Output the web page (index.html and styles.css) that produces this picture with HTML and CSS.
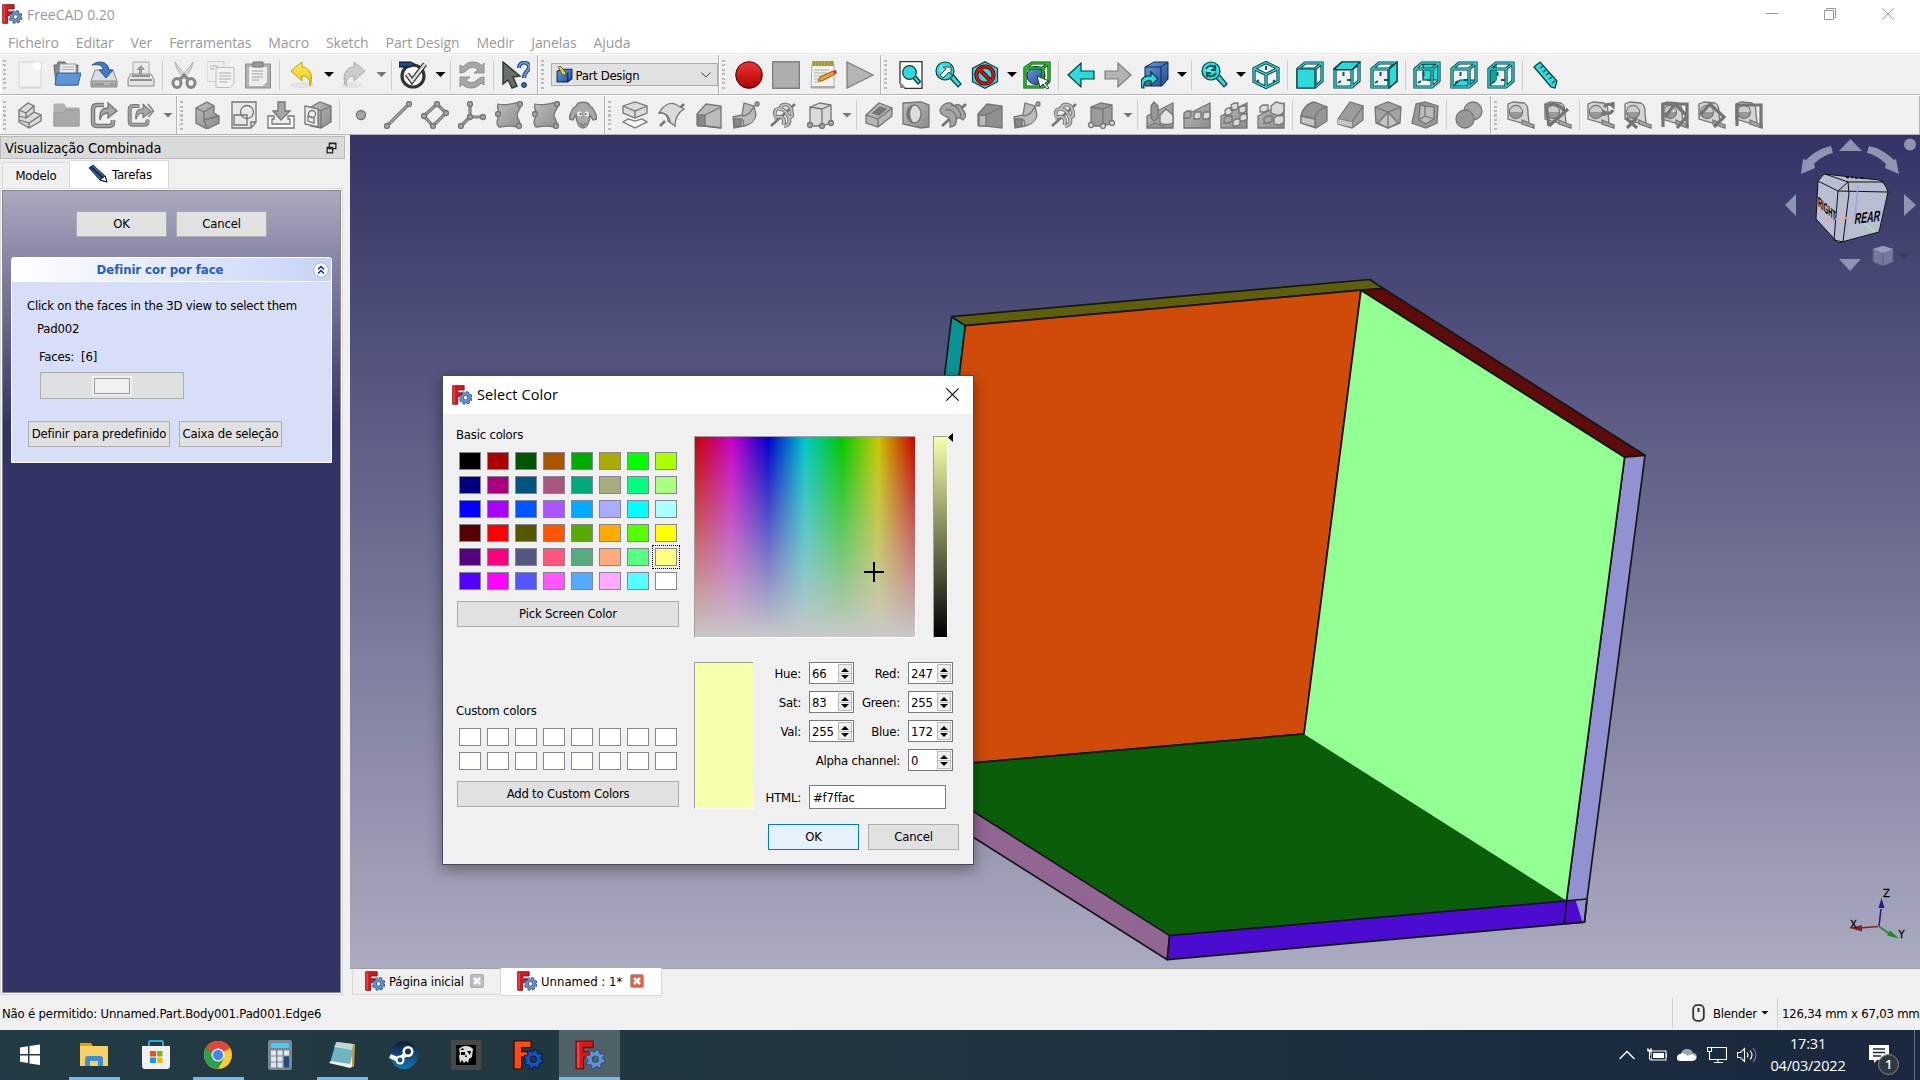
FILE: index.html
```
<!DOCTYPE html>
<html lang="pt">
<head>
<meta charset="utf-8">
<title>FreeCAD 0.20</title>
<link rel="stylesheet" href="styles.css">
</head>
<body>
<svg class="defs" width="0" height="0">
<defs>
<linearGradient id="gr" x1="0" y1="0" x2="0" y2="1"><stop offset="0" stop-color="#ee3434"/><stop offset="1" stop-color="#b00000"/></linearGradient>
<linearGradient id="gy" x1="0" y1="0" x2="0" y2="1"><stop offset="0" stop-color="#fbe96a"/><stop offset="1" stop-color="#ecc800"/></linearGradient>
<linearGradient id="gb" x1="0" y1="0" x2="1" y2="1"><stop offset="0" stop-color="#6b9bd8"/><stop offset="1" stop-color="#1c4a93"/></linearGradient>
<linearGradient id="gg" x1="0" y1="0" x2="1" y2="1"><stop offset="0" stop-color="#bdbdbd"/><stop offset="1" stop-color="#8c8c8c"/></linearGradient>
<linearGradient id="steam" x1="0" y1="0" x2="0" y2="1"><stop offset="0" stop-color="#14183c"/><stop offset="1" stop-color="#1477b0"/></linearGradient>
<symbol id="logo" viewBox="0 0 28 28"><path d="M1 1h16v6H8v4h6v5H8v11H1z" fill="#d8191c" stroke="#7a0c0e" stroke-width="1.200"/><path d="M2 2h2v24H2z" fill="#f04a4a"/><g fill="none"><circle cx="19" cy="18" r="7.600" stroke="#2c4a82" stroke-width="3.800" stroke-dasharray="3.600 2.370"/><circle cx="19" cy="18" r="5" stroke="#2c4a82" stroke-width="5"/><circle cx="19" cy="18" r="7.200" stroke="#6f98d2" stroke-width="2.400" stroke-dasharray="2.200 3.455" stroke-dashoffset="-.6"/><circle cx="19" cy="18" r="5" stroke="#6490cd" stroke-width="3.400"/></g></symbol>
<symbol id="new" viewBox="0 0 28 28"><path d="M3 1h22v25H3z" fill="#f3f3f3" stroke="#d6d6d6"/><circle cx="21" cy="5" r="4" fill="#fff"/><path d="M3 27h22" stroke="#ccc"/></symbol>
<symbol id="open" viewBox="0 0 28 28"><path d="M1 4h3l1-3h7l2 3h11l-1 20H3z" fill="#8b8b8b" stroke="#666"/><path d="M7 3h16v16H6z" fill="#eee" stroke="#999"/><path d="M9 6h12M9 8.500h12" stroke="#aaa"/><path d="M4 12h24l-3 12H2z" fill="#5f95d4" stroke="#2f62a4"/></symbol>
<symbol id="save" viewBox="0 0 28 28"><path d="M5 9h18l4 11v6H1v-6z" fill="#ddd" stroke="#8a8a8a"/><path d="M2 20h24v5H2z" fill="#b5b5b5" stroke="#888"/><path d="M4 23h10M20 23h4" stroke="#777"/><path d="M2 4C8-1 18 0 19 9h4l-7 8-7-8h4C13 4 8 3 2 4z" fill="#4479bd" stroke="#24579b"/></symbol>
<symbol id="print" viewBox="0 0 28 28"><path d="M6 1h16v14H6z" fill="#eaeaea" stroke="#aaa"/><path d="M14 4l4 5h-3v4h-3V9h-3z" fill="#999"/><path d="M1 18l3-5h20l3 5v7H1z" fill="#e3e3e3" stroke="#888"/><path d="M5 15h18M3 19h22" stroke="#777" stroke-width="1.500"/></symbol>
<symbol id="cut" viewBox="0 0 28 28"><path d="M5 1c1 7 5 12 10 17l2-1zM23 1c-1 7-5 12-10 17l-2-1z" fill="#ddd" stroke="#aaa"/><g fill="none" stroke="#858585" stroke-width="3"><ellipse cx="7" cy="22" rx="4" ry="4.500"/><ellipse cx="21" cy="22" rx="4" ry="4.500"/><path d="M10 18l4-4 4 4"/></g></symbol>
<symbol id="copy" viewBox="0 0 28 28"><path d="M0 .5h17v20H0z" fill="#efefef" stroke="#ccc"/><path d="M9 6.500h18v16l-4 4H9z" fill="#f1f1f1" stroke="#bdbdbd"/><path d="M12 12h12M12 15h12M12 18h12M12 21h8M3 5h8M3 8h4" stroke="#c4c4c4" stroke-width="1.400"/></symbol>
<symbol id="paste" viewBox="0 0 28 28"><path d="M1.500 3h25v24h-25z" fill="#b0b0b0" stroke="#8e8e8e"/><path d="M5 6h18v15l-4 4H5z" fill="#eee"/><path d="M9 1h10v5H9z" fill="#999" stroke="#777"/><path d="M8 10h11M8 13h11M8 16h11M8 19h7" stroke="#bbb" stroke-width="1.400"/></symbol>
<symbol id="undo" viewBox="0 0 28 28"><ellipse cx="14" cy="24" rx="12" ry="3" fill="#e2e2e2"/><path d="M3 10L14 1v5c8 0 12 10 8 19 0-6-2-10-8-10v5z" fill="url(#gy)" stroke="#c4a000"/></symbol>
<symbol id="redo" viewBox="0 0 28 28"><ellipse cx="12" cy="24" rx="11" ry="3" fill="#e2e2e2"/><path d="M25 10L14 1v5C4 6 2 18 6 25c0-6 2-10 8-10v5z" fill="#ccc" stroke="#aaa"/></symbol>
<symbol id="check" viewBox="0 0 28 28"><circle cx="14" cy="15" r="11" fill="#fff" stroke="#2e3436" stroke-width="3.200"/><path d="M0 1h12l4 2.500L12 6H0z" fill="#204a87" stroke="#111"/><path d="M8 13l5 7L26 3" fill="none" stroke="#333" stroke-width="5"/><path d="M8 13l5 7L26 3" fill="none" stroke="#ddd" stroke-width="2.600"/></symbol>
<symbol id="refresh" viewBox="0 0 28 28"><path d="M2 12V4l3 2c5-7 15-6 19-1l2-3v10H16l4-3c-4-4-8-3-11 0-2 2-4 3-7 3zM26 16v8l-3-2c-5 7-15 6-19 1l-2 3V16h10l-4 3c4 4 8 3 11 0 2-2 4-3 7-3z" fill="#a6a6a6" stroke="#8d8d8d"/></symbol>
<symbol id="whats" viewBox="0 0 28 28"><path d="M1 1v22l5-4 4 8 5-2-4-9 7-1z" fill="#6a6f6b" stroke="#2e3436" stroke-width="1.400"/><path d="M17 7c0-7 10-7 10-1 0 5-5 4-5 11" fill="none" stroke="#1c3f75" stroke-width="4"/><path d="M17 7c0-7 10-7 10-1 0 5-5 4-5 11" fill="none" stroke="#6a9bd5" stroke-width="2"/><circle cx="22" cy="24" r="2.500" fill="#3465a4" stroke="#1c3f75"/></symbol>
<symbol id="rec" viewBox="0 0 28 28"><circle cx="14" cy="14" r="13.300" fill="url(#gr)" stroke="#400"/></symbol>
<symbol id="stop" viewBox="0 0 28 28"><path d="M.7.7h26.600v26.600H.7z" fill="#aeaeae" stroke="#808080" stroke-width="1.400"/></symbol>
<symbol id="notes" viewBox="0 0 28 28"><path d="M3 3h22v24H2z" fill="#f1f1ef" stroke="#aaa"/><path d="M2 25h24v2H2z" fill="#aaa"/><path d="M3 0h22v5H3z" fill="#c9b02a"/><path d="M5 0v5M8 0v5M11 0v5M14 0v5M17 0v5M20 0v5M23 0v5" stroke="#777"/><path d="M5 9h15M5 12h13M5 15h9M5 18h5M5 21h5" stroke="#c4c4c4" stroke-width="1.300"/><path d="M9 20l2-4 13-6 2 3-13 7z" fill="#f0a030" stroke="#8c5a10"/><path d="M24 10l3-1 1 3-2 1z" fill="#d22"/></symbol>
<symbol id="play" viewBox="0 0 28 28"><path d="M1 1l26 13L1 27z" fill="#b4b4b4" stroke="#7f7f7f" stroke-width="1.300"/></symbol>
<symbol id="lens" viewBox="0 0 28 28"><path d="M14 15l10 11 3-3-9-11z" class="c"/><circle cx="11" cy="10" r="9" class="c"/><circle cx="9" cy="8" r="4" fill="#6be9e9"/></symbol>
<symbol id="fitall" viewBox="0 0 28 28"><path d="M3 .7h22v26.600H8l-5-5z" fill="#fff" stroke="#333" stroke-width="1.300"/><path d="M3 21v6h6z" fill="#888"/><path d="M15 16l6 7 2.500-2.500-6-7z" class="c"/><circle cx="12.500" cy="11.500" r="6.800" class="c"/></symbol>
<symbol id="fitsel" viewBox="0 0 28 28"><use href="#lens" width="28" height="28"/><path d="M6 14l6-6-3-2h8v8l-2-3-6 6z" fill="#fff" stroke="#244"/></symbol>
<symbol id="nodraw" viewBox="0 0 28 28"><path d="M14 .8l12.500 6.500v13.400L14 27.200 1.500 20.700V7.300z" class="c"/><circle cx="14" cy="14" r="8.600" fill="none" stroke="#400" stroke-width="4"/><path d="M8 8l12 12" stroke="#400" stroke-width="4"/><circle cx="14" cy="14" r="8.600" fill="none" stroke="#d11" stroke-width="2.400"/><path d="M8 8l12 12" stroke="#d11" stroke-width="2.400"/></symbol>
<symbol id="bbox" viewBox="0 0 28 28"><circle cx="13" cy="14.500" r="9" fill="url(#gb)" stroke="#10284c"/><path d="M2 7l7-5h17v18l-6 6H2zM2 7h18v19M20 7l6-5" fill="none" stroke="#053a14" stroke-width="3.200"/><path d="M2 7l7-5h17v18l-6 6H2zM2 7h18v19M20 7l6-5" fill="none" stroke="#19d319" stroke-width="1.600"/><path d="M14 15l12 5-4 2 4 5-2 1-4-5-3 3z" fill="#fff" stroke="#333"/></symbol>
<symbol id="left" viewBox="0 0 28 28"><path d="M1 14L14 2v8h13v8H14v8z" class="c"/></symbol>
<symbol id="right" viewBox="0 0 28 28"><path d="M27 14L14 2v8H1v8h13v8z" fill="#b3b3b3" stroke="#7d7d7d" stroke-width="1.200"/></symbol>
<symbol id="link" viewBox="0 0 28 28"><path d="M4 6l9-5h14v17l-6 7H4z" fill="url(#gb)" stroke="#10284c"/><path d="M4 6h16v19M20 6l7-5" fill="none" stroke="#10284c"/><path d="M1 27c-3-9 2-13 9-12v-4l7 7-7 6v-4c-5-1-8 1-7 7z" class="c"/></symbol>
<symbol id="zoomr" viewBox="0 0 28 28"><use href="#lens" width="28" height="28"/><path d="M6 8c2-4 7-4 9-1v-3 5h-4M16 12c-2 4-7 4-9 1v3-4h4" fill="none" stroke="#155" stroke-width="2"/></symbol>
<symbol id="iso" viewBox="0 0 28 28"><path d="M14 5v4M7 19.500l-2 1M21 19.500l2 1" class="cs"/><path d="M14 1.500l12 6v13l-12 6-12-6v-13zM2 7.500l12 6 12-6M14 13.500v13" class="cw"/><path d="M14 1.500l12 6v13l-12 6-12-6v-13zM2 7.500l12 6 12-6M14 13.500v13" class="cl"/></symbol>
<symbol id="cube" viewBox="0 0 28 28"><path d="M10.500 11v4M8 20l-3 2M14 19h4" class="cs"/><path d="M2 8l7-6h17v18l-7 6H2zM2 8h17v18M19 8l7-6" class="cw"/><path d="M2 8l7-6h17v18l-7 6H2zM2 8h17v18M19 8l7-6" class="cl"/></symbol>
<symbol id="vfront" viewBox="0 0 28 28"><use href="#cube"/><path d="M1 8h18v19H1z" class="c"/></symbol>
<symbol id="vtop" viewBox="0 0 28 28"><use href="#cube"/><path d="M1 8.500L9 1h18l-8 7.500z" class="c"/></symbol>
<symbol id="vright" viewBox="0 0 28 28"><use href="#cube"/><path d="M19 8.500L27 1v19l-8 7z" class="c"/></symbol>
<symbol id="vrear" viewBox="0 0 28 28"><path d="M10 3h16v16H10z" class="c"/><use href="#cube"/></symbol>
<symbol id="vbot" viewBox="0 0 28 28"><path d="M2 26l8-7h16l-7 7z" class="c"/><use href="#cube"/></symbol>
<symbol id="vleft" viewBox="0 0 28 28"><path d="M2 8l8-6v17l-8 7z" fill="#12a0a0"/><use href="#cube"/></symbol>
<symbol id="ruler" viewBox="0 0 28 28"><path d="M3 6l6-5 17 19-2 7-4-1z" class="c"/><path d="M9 7l3-2M12 11l3-2M15 14l3-2M18 18l3-2M21 22l3-2" stroke="#133" stroke-width="1.200"/></symbol>
<symbol id="part" viewBox="0 0 28 28"><path d="M3 9l9-7 6 3v6l7 3v6l-12 7-10-6z" class="w"/><path d="M3 9l7 3 8-7M10 12v5l-7-2M10 17l8-6M3 19l10 3 12-8M13 22v5" class="n"/></symbol>
<symbol id="folder" viewBox="0 0 28 28"><path d="M1 3h10l2 4h13v18H1z" fill="#b2b2b2" stroke="#aaa"/><path d="M1 12h9l3-3h13v16H1z" fill="#a9a9a9" stroke="#999"/></symbol>
<symbol id="exp" viewBox="0 0 28 28"><path d="M14 4H7Q3 4 3 8v13q0 4 4 4h12q4 0 4-4v-2" fill="none" stroke="#777" stroke-width="4.500"/><path d="M14 4H7Q3 4 3 8v13q0 4 4 4h12q4 0 4-4v-2" fill="none" stroke="#a5a5a5" stroke-width="2.200"/><path d="M10 19C9 10 12 7 18 7V2l9 8-9 7v-5c-5 0-7 2-8 7z" class="g"/></symbol>
<symbol id="exp2" viewBox="0 0 28 28"><use href="#exp" width="25" height="28"/><path d="M21 3l5.500 7-5 6" class="n" stroke-width="3"/></symbol>
<symbol id="body" viewBox="0 0 28 28"><path d="M3 7l11-6 7 4v7l5 3v7l-12 6-11-6z" fill="url(#gg)" class="s"/><path d="M3 7l8 4 10-6M11 11v8l15-4M11 19l3 8" class="n"/></symbol>
<symbol id="sketch" viewBox="0 0 28 28"><path d="M2 1h24v20l-5 6H2z" fill="#e8e8e8" class="s"/><path d="M4 14h13v10H4z" class="n"/><circle cx="17" cy="11" r="6.500" class="n"/><path d="M26 21h-5v6" class="n"/></symbol>
<symbol id="imp" viewBox="0 0 28 28"><path d="M11 1h7v9h5l-9 9-8-9h5z" class="g"/><path d="M7 15H1v12h26V15h-6v3h2v5H5v-5h2z" fill="#fff" class="s"/></symbol>
<symbol id="map" viewBox="0 0 28 28"><path d="M7 6l9-5 11 4v16l-10 6-10-2z" fill="url(#gg)" class="s"/><path d="M27 5l-10 5v17M7 6l10 4" class="n"/><path d="M1 5l13 3v18L1 23z" fill="#eee" class="s"/><circle cx="8" cy="13" r="3.500" class="n"/><path d="M4 15l6 2v5l-6-2z" class="n"/></symbol>
<symbol id="pt" viewBox="0 0 28 28"><circle cx="14" cy="14" r="4.500" class="g"/></symbol>
<symbol id="line" viewBox="0 0 28 28"><path d="M3 25L25 3" class="k"/><path d="M3 25L25 3" class="kl"/><circle cx="3" cy="25" r="2.500" class="g"/><circle cx="25" cy="3" r="2.500" class="g"/></symbol>
<symbol id="plane" viewBox="0 0 28 28"><path d="M3 15L16 3l9 9-13 13z" class="k"/><path d="M3 15L16 3l9 9-13 13z" class="kl"/><circle cx="3" cy="15" r="2.500" class="g"/><circle cx="16" cy="3" r="2.500" class="g"/><circle cx="25" cy="12" r="2.500" class="g"/><circle cx="12" cy="25" r="2.500" class="g"/></symbol>
<symbol id="cs" viewBox="0 0 28 28"><path d="M12 3v13L3 25M12 16h13" class="k"/><path d="M12 3v13L3 25M12 16h13" class="kl"/><circle cx="12" cy="3" r="2.500" class="g"/><circle cx="3" cy="25" r="2.500" class="g"/><circle cx="25" cy="16" r="2.500" class="g"/><circle cx="12" cy="16" r="2.500" class="g"/></symbol>
<symbol id="shp" viewBox="0 0 28 28"><path d="M3 3c7 2 14 0 22-2 3 5-3 9-3 13s6 9 2 13c-7-4-13-1-20-1-4-4-1-8 0-12s-3-7-1-11z" fill="url(#gg)" class="s"/><circle cx="25" cy="3" r="2.500" class="g"/><circle cx="3" cy="13" r="2.500" class="g"/><circle cx="24" cy="25" r="2.500" class="g"/></symbol>
<symbol id="sheep" viewBox="0 0 28 28"><path d="M7 5C9 0 19 0 21 5c4 2 6 8 7 13l-4 1-3-5c0 6-3 13-7 13S7 20 7 14l-3 5-4-1C1 13 3 7 7 5z" fill="#a8a8a8" class="s"/><circle cx="10.500" cy="13" r="2.500" fill="#eee"/><circle cx="17.500" cy="13" r="2.500" fill="#eee"/><circle cx="11.500" cy="13" r="1" fill="#555"/><circle cx="16.500" cy="13" r="1" fill="#555"/><path d="M11 22l3 3 3-3" class="n"/></symbol>
<symbol id="pad" viewBox="0 0 28 28"><path d="M2 5l12-4 12 4v7l-12 5-12-5z" class="w"/><path d="M2 5l12 5 12-5M14 10v7" class="n"/><path d="M2 21l5-3 7 2 7-2 5 3-12 6z" fill="#f4f4f4" class="s"/></symbol>
<symbol id="rev" viewBox="0 0 28 28"><path d="M2 25l5-5M22 7l4-4" stroke="#777" stroke-width="2.500"/><path d="M1 12C5 5 11 1 17 3l9 5c-5 3-9 9-9 17l-7-5c0-5-3-9-9-8z" class="w"/><path d="M1 12c7-1 11 4 11 10" class="n"/></symbol>
<symbol id="loft" viewBox="0 0 28 28"><path d="M2 13l9-10 15 2v22l-16-2-8-1z" fill="#bbb" class="s"/><path d="M3 14h7v11H3z" fill="#888" class="s"/><path d="M10 14L26 6M10 25l16 2" class="n"/></symbol>
<symbol id="sweep" viewBox="0 0 28 28"><path d="M1 16l9-2 2-12 10 3 2 9c-1 6-6 10-12 11l-10 2z" fill="#bbb" class="s"/><path d="M3 18l8 1 1 6M10 15c5 0 9-3 12-10" class="n"/><circle cx="25" cy="3" r="2" class="g"/><path d="M2 18h7v7H2z" fill="#888" class="s"/></symbol>
<symbol id="helix" viewBox="0 0 28 28"><path d="M2 25L26 3" stroke="#777" stroke-width="2.500"/><path d="M6 14C4 6 14 6 18 13s3 11-3 12M11 9c1-8 10-6 11-1s3 8-2 8M5 17c8-4 12 1 9 7" fill="none" stroke="#777" stroke-width="4"/><path d="M6 14C4 6 14 6 18 13s3 11-3 12M11 9c1-8 10-6 11-1s3 8-2 8M5 17c8-4 12 1 9 7" fill="none" stroke="#bebebe" stroke-width="2"/></symbol>
<symbol id="abox" viewBox="0 0 28 28"><path d="M4 6l10-4 11 2v18l-9 3H4z" class="w"/><path d="M4 6l12 2 9-4M16 8v16" class="n"/><circle cx="4" cy="24" r="2.500" class="g"/><circle cx="16" cy="25" r="2.500" class="g"/><circle cx="25" cy="22" r="2.500" class="g"/></symbol>
<symbol id="sbox" viewBox="0 0 28 28"><path d="M4 6l10-4 11 2v18l-9 3H4z" fill="#9b9b9b" class="s"/><path d="M4 6l12 2 9-4M16 8v16" class="n"/><circle cx="4" cy="24" r="2.500" class="w"/><circle cx="16" cy="25" r="2.500" class="w"/><circle cx="25" cy="22" r="2.500" class="w"/></symbol>
<symbol id="pocket" viewBox="0 0 28 28"><path d="M1 14L14 2l13 5v8L13 26 1 22z" fill="#b5b5b5" class="s"/><path d="M1 14l12 4L27 7M13 18v8" class="n"/><path d="M8 12l7-6 6 2-7 6z" fill="#777" class="s"/></symbol>
<symbol id="hole" viewBox="0 0 28 28"><path d="M1 2l18-1 8 3v22l-8 1L1 23z" fill="url(#gg)" class="s"/><ellipse cx="12" cy="13" rx="7" ry="9" fill="#ddd" class="s"/><path d="M12 4c-5 5-5 13 0 18-10 0-10-18 0-18z" fill="#777"/></symbol>
<symbol id="groove" viewBox="0 0 28 28"><path d="M3 25L27 3" stroke="#777" stroke-width="3"/><path d="M1 9c3-8 11-9 14-4 3-3 8-1 8 3 5 4 4 9 1 11-4-4-7-2-7 1 1 4-3 6-6 6 1-7-1-10-5-11-3-1-5-3-5-6z" fill="#a5a5a5" class="s"/><path d="M6 9c6-2 13 4 11 11M12 4c6 0 10 7 10 12" class="n"/></symbol>
<symbol id="sloft" viewBox="0 0 28 28"><path d="M2 13l9-10 15 2v22l-16-2-8-1z" fill="#909090" class="s"/><path d="M3 14h7v11H3z" fill="#bbb" class="s"/><path d="M10 14L26 6" class="n"/></symbol>
<symbol id="pat" viewBox="0 0 28 28"><path d="M1 15l26-13v25H1z" fill="url(#gg)" class="s"/></symbol>
<symbol id="mirror" viewBox="0 0 28 28"><use href="#pat"/><path d="M5 5l3-4 4 4v12l-4 3-3-3zM1 26l8-4 10 4" fill="#999" class="s"/><path d="M14 14l6-6 7 6v8q-6 3-13 0z" fill="#e3e3e3" class="s"/></symbol>
<symbol id="lin" viewBox="0 0 28 28"><use href="#pat"/><path d="M1 12l3-2h4v5l-2 2H1z" class="g"/><path d="M11 13l2-2h5v5l-2 2h-5zM20 13l2-2h5v5l-2 2h-5z" class="w"/></symbol>
<symbol id="pol" viewBox="0 0 28 28"><use href="#pat"/><path d="M4 17l3-2h5v5l-3 2H4z" class="g"/><path d="M5 9l3-2h4v5l-3 2H5zM11 4l3-2h4v5l-3 2h-4zM19 7l3-2h4v5l-3 2h-4zM20 15l3-2h4v5l-3 2h-4zM13 20l3-2h4v5l-3 2h-4z" class="w"/></symbol>
<symbol id="multi" viewBox="0 0 28 28"><use href="#pat"/><path d="M14 5l5-4 8 2v8l-5 4-8-3zM3 6l3-2h5v5l-3 2H3zM17 17l4-3 6 1v6l-4 3-6-1z" class="w"/><path d="M7 17l3-2h5v5l-3 2H7z" class="g"/></symbol>
<symbol id="fillet" viewBox="0 0 28 28"><path d="M1 15C2 8 8 2 14 1l13 5v14l-11 7-15-5z" fill="#969696" class="s"/><path d="M1 15l14 3c0-6 5-11 12-12M15 18v9" class="n"/><path d="M1 15l14 3v8L1 22z" fill="#c5c5c5" class="s"/></symbol>
<symbol id="chamf" viewBox="0 0 28 28"><path d="M1 18L13 1l13 4v14l-11 8-14-4z" fill="#9d9d9d" class="s"/><path d="M1 18l14 3L26 5M15 21v6" class="n"/><path d="M1 18l14 3v5L1 23z" fill="#c5c5c5"/></symbol>
<symbol id="draft" viewBox="0 0 28 28"><path d="M1 6l13-5 13 5-1 16-12 5-12-5z" fill="#a2a2a2" class="s"/><path d="M1 6l13 5 13-5M14 11v16" class="n"/><path d="M14 11L4 22l10 5 10-5z" fill="#c4c4c4" class="s"/><path d="M14 11v16" class="n"/></symbol>
<symbol id="thick" viewBox="0 0 28 28"><path d="M5 3l9-2 13 4-1 17-11 5-14-5z" fill="#999" class="s"/><path d="M9 4l14 2v12l-8 5-7-4z" fill="#bcbcbc" class="s"/><path d="M14 5v10l-6 4M14 15l9 3" class="n"/></symbol>
<symbol id="bool" viewBox="0 0 28 28"><circle cx="18" cy="10" r="9" class="g"/><circle cx="10" cy="18" r="9" fill="#999" class="s"/></symbol>
<symbol id="tape" viewBox="0 0 28 28"><path d="M1 3l5-2 11 1c4 2 4 6 4 11l1 8-4 2L1 18z" fill="#d4d4d4" class="s"/><circle cx="9" cy="11" r="6.500" fill="#999" class="s"/><path d="M3 11a6 6 0 0 1 12 0z" fill="#ccc"/><path d="M15 19l7 3 5 2v3l-12-4z" class="g"/></symbol>
<symbol id="tape2" viewBox="0 0 28 28"><use href="#tape"/><path d="M5 25L2 3M5 25L24 8M4 4c9-2 15 2 17 8" class="k"/></symbol>
<symbol id="tape3" viewBox="0 0 28 28"><use href="#tape"/><path d="M17 6c3-4 7-3 9-1V1M26 9c-2 4-6 4-9 2v4" class="k"/></symbol>
<symbol id="tape4" viewBox="0 0 28 28"><use href="#tape"/><path d="M2 17l11 10M13 17L3 27" class="k"/></symbol>
<symbol id="tape5" viewBox="0 0 28 28"><use href="#tape"/><path d="M2 26V3h24v23M4 16L14 3l12 12-10 12" class="k"/></symbol>
<symbol id="tape6" viewBox="0 0 28 28"><use href="#tape"/><path d="M2 14L12 3l14 13-10 10" class="k"/></symbol>
<symbol id="tape7" viewBox="0 0 28 28"><use href="#tape"/><path d="M2 25V4h24v23" class="k"/></symbol>
<symbol id="pd" viewBox="0 0 16 16"><path d="M1 5l5-2h9v9l-4 3H1z" fill="url(#gb)" stroke="#10284c"/><path d="M11 6v9" stroke="#10284c"/><path d="M2 1l2-1 5 6v3L6 8z" fill="#f4d525" stroke="#333" stroke-width=".7"/></symbol>
<symbol id="pencil" viewBox="0 0 20 20"><path d="M1 4l4-3 12 11 2 6-7-2z" fill="#3465a4" stroke="#10284c"/><path d="M3 3l12 11" stroke="#10284c" stroke-width="2"/><path d="M17 12l2 6-7-2z" fill="#fff" stroke="#111"/></symbol>
<symbol id="x" viewBox="0 0 14 14"><rect x=".5" y=".5" width="13" height="13" rx="1.500" fill="currentColor" stroke="#999" stroke-opacity=".7"/><path d="M4 4l6 6M10 4l-6 6" stroke="#fff" stroke-width="2.500"/></symbol>
</defs>
</svg>

<header class="titlebar">
  <svg class="app-icon"><use href="#logo"/></svg>
  <span class="app-name">FreeCAD 0.20</span>
  <div class="window-buttons">
    <svg viewBox="0 0 12 12"><path d="M0 5.500h12"/></svg>
    <svg viewBox="0 0 12 12"><path d="M.5 2.500h9v9h-9zM2.500 2.500v-2h9v9h-2"/></svg>
    <svg viewBox="0 0 12 12"><path d="M.5.5l11 11M11.500.5l-11 11"/></svg>
  </div>
</header>
<nav class="menubar"><span>Ficheiro</span><span>Editar</span><span>Ver</span><span>Ferramentas</span><span>Macro</span><span>Sketch</span><span>Part Design</span><span>Medir</span><span>Janelas</span><span>Ajuda</span></nav>

<div class="toolrow">
  <div class="toolbar tb-file"><i class="grip"></i>
    <svg class="ic"><use href="#new"/></svg><svg class="ic"><use href="#open"/></svg><svg class="ic"><use href="#save"/></svg><svg class="ic"><use href="#print"/></svg><i class="sep"></i>
    <svg class="ic"><use href="#cut"/></svg><svg class="ic"><use href="#copy"/></svg><svg class="ic"><use href="#paste"/></svg><i class="sep"></i>
    <svg class="ic"><use href="#undo"/></svg><i class="drop"></i><svg class="ic"><use href="#redo"/></svg><i class="drop off"></i><i class="sep"></i>
    <svg class="ic"><use href="#check"/></svg><i class="drop"></i><i class="sep"></i>
    <svg class="ic"><use href="#refresh"/></svg><i class="sep"></i><svg class="ic"><use href="#whats"/></svg>
  </div>
  <div class="toolbar tb-wb"><i class="grip"></i>
    <div class="combo"><svg class="combo-icon"><use href="#pd"/></svg><span>Part Design</span><svg class="chev" viewBox="0 0 10 6"><path d="M.5.5L5 5 9.500.5"/></svg></div>
  </div>
  <div class="toolbar tb-macro"><i class="grip"></i>
    <svg class="ic"><use href="#rec"/></svg><svg class="ic"><use href="#stop"/></svg><svg class="ic"><use href="#notes"/></svg><svg class="ic"><use href="#play"/></svg>
  </div>
  <div class="toolbar tb-view"><i class="grip"></i>
    <svg class="ic"><use href="#fitall"/></svg><svg class="ic"><use href="#fitsel"/></svg><svg class="ic"><use href="#nodraw"/></svg><i class="drop"></i><svg class="ic"><use href="#bbox"/></svg><i class="sep"></i>
    <svg class="ic"><use href="#left"/></svg><svg class="ic"><use href="#right"/></svg><svg class="ic"><use href="#link"/></svg><i class="drop"></i><i class="sep"></i>
    <svg class="ic"><use href="#zoomr"/></svg><i class="drop"></i><svg class="ic"><use href="#iso"/></svg><i class="sep"></i>
    <svg class="ic"><use href="#vfront"/></svg><svg class="ic"><use href="#vtop"/></svg><svg class="ic"><use href="#vright"/></svg><i class="sep"></i>
    <svg class="ic"><use href="#vrear"/></svg><svg class="ic"><use href="#vbot"/></svg><svg class="ic"><use href="#vleft"/></svg><i class="sep"></i>
    <svg class="ic"><use href="#ruler"/></svg>
  </div>
</div>
<div class="toolrow second">
  <div class="toolbar tb-struct"><i class="grip"></i>
    <svg class="ic"><use href="#part"/></svg><svg class="ic"><use href="#folder"/></svg><svg class="ic"><use href="#exp"/></svg><svg class="ic"><use href="#exp2"/></svg><i class="drop off"></i>
  </div>
  <div class="toolbar tb-help"><i class="grip"></i>
    <svg class="ic"><use href="#body"/></svg><svg class="ic"><use href="#sketch"/></svg><svg class="ic"><use href="#imp"/></svg><svg class="ic"><use href="#map"/></svg><i class="sep"></i>
    <svg class="ic"><use href="#pt"/></svg><svg class="ic"><use href="#line"/></svg><svg class="ic"><use href="#plane"/></svg><svg class="ic"><use href="#cs"/></svg><svg class="ic"><use href="#shp"/></svg><svg class="ic"><use href="#shp"/></svg><svg class="ic"><use href="#sheep"/></svg>
  </div>
  <div class="toolbar tb-model"><i class="grip"></i>
    <svg class="ic"><use href="#pad"/></svg><svg class="ic"><use href="#rev"/></svg><svg class="ic"><use href="#loft"/></svg><svg class="ic"><use href="#sweep"/></svg><svg class="ic"><use href="#helix"/></svg><svg class="ic"><use href="#abox"/></svg><i class="drop off"></i><i class="sep"></i>
    <svg class="ic"><use href="#pocket"/></svg><svg class="ic"><use href="#hole"/></svg><svg class="ic"><use href="#groove"/></svg><svg class="ic"><use href="#sloft"/></svg><svg class="ic"><use href="#sweep"/></svg><svg class="ic"><use href="#helix"/></svg><svg class="ic"><use href="#sbox"/></svg><i class="drop off"></i><i class="sep"></i>
    <svg class="ic"><use href="#mirror"/></svg><svg class="ic"><use href="#lin"/></svg><svg class="ic"><use href="#pol"/></svg><svg class="ic"><use href="#multi"/></svg><i class="sep"></i>
    <svg class="ic"><use href="#fillet"/></svg><svg class="ic"><use href="#chamf"/></svg><svg class="ic"><use href="#draft"/></svg><svg class="ic"><use href="#thick"/></svg><i class="sep"></i>
    <svg class="ic"><use href="#bool"/></svg>
  </div>
  <div class="toolbar tb-measure"><i class="grip"></i>
    <svg class="ic"><use href="#tape"/></svg><svg class="ic"><use href="#tape2"/></svg><i class="sep"></i>
    <svg class="ic"><use href="#tape3"/></svg><svg class="ic"><use href="#tape4"/></svg><svg class="ic"><use href="#tape5"/></svg><svg class="ic"><use href="#tape6"/></svg><svg class="ic"><use href="#tape7"/></svg>
  </div>
</div>

<main class="work">
  <aside class="dock">
    <div class="dock-title"><span>Visualização Combinada</span><svg viewBox="0 0 10 11"><path d="M3 1h6v5H3zM3 1.500h6M1 5h5v5H1zM1 5.500h5"/></svg></div>
    <div class="dock-tabs"><div class="dtab">Modelo</div><div class="dtab on"><svg><use href="#pencil"/></svg><span>Tarefas</span></div></div>
    <div class="task-frame"><div class="task-area">
      <div class="task-buttons"><button>OK</button><button>Cancel</button></div>
      <section class="task-box">
        <h2><span>Definir cor por face</span><svg viewBox="0 0 16 16"><circle cx="8" cy="8" r="7.300" fill="#fff" stroke="#a9b0c8"/><path d="M5 7.500l3-3 3 3M5 11.500l3-3 3 3" fill="none" stroke="#0b2f9c" stroke-width="1.500"/></svg></h2>
        <div class="task-body">
          <p>Click on the faces in the 3D view to select them</p>
          <fieldset><legend>Pad002</legend><div class="faces">Faces:&nbsp; [6]</div><button class="color-button"><i></i></button></fieldset>
          <div class="task-actions"><button>Definir para predefinido</button><button>Caixa de seleção</button></div>
        </div>
      </section>
    </div></div>
  </aside>

  <section class="center">
    <svg class="view3d" viewBox="350 135 1570 833">
      <g stroke="#161616" stroke-width="1.700" stroke-linejoin="round">
        <path d="M951.600 317L965.300 325.400 959.200 376 900 820V700L944.500 376z" fill="#0a9494"/>
        <path d="M951.600 316.600L1369.700 279.500 1383.400 288.500 1361 290.200 965.300 325.600z" fill="#5e5e0b"/>
        <path d="M965.300 325.600L1361 290.200 1304 734 912 768z" fill="#d04b0a"/>
        <path d="M1361 290.200L1383.400 288.500 1645 455.300 1624.600 457.200z" fill="#5e0b0b"/>
        <path d="M1624.600 457.200L1645 455.300 1587 899 1584.500 922.200 1564.800 923.600 1566.500 900.400z" fill="#9292d2"/>
        <path d="M900 769.300L1304 734 1566.500 900.400 1169.600 935.600 900 765z" fill="#0a5e0a" stroke="none"/>
        <path d="M1361 290.200L1624.600 457.200 1566.500 900.400 1304 734z" fill="#92ff92" stroke="none"/>
        <path d="M900 769.300L1304 734 1361 290.200 1624.600 457.200 1566.500 900.400" fill="none"/>
        <path d="M900 765L1169.600 935.600 1167.300 959.700 900 791z" fill="#926692"/>
        <path d="M1169.600 935.600L1575.500 899.700 1582.600 922.500 1167.300 959.700z" fill="#4b0bd0" stroke="none"/>
        <path d="M1169.600 935.600L1587 899 1584.500 922.200 1167.300 959.700zM1566.500 900.400L1564.500 923.600" fill="none"/>
      </g>
      <g fill="#9292b1">
        <path d="M1850.500 139l11.500 12h-23z"/><path d="M1839 259h22l-11 12z"/><path d="M1796 194v22l-11-11zM1904 194v22l12-11z"/><circle cx="1910" cy="144.500" r="6"/>
        <path d="M1831 146l2 7c-8 2-14 6-19 11l1 4-14 6 2-15 3 1c7-7 15-12 25-14zM1869 146l-2 7c8 2 14 6 19 11l-1 4 14 6-3-15-2 1c-7-7-15-12-25-14z"/>
      </g>
      <g fill="#b8bdd1" stroke="#111" stroke-linejoin="round">
        <path d="M1818 181l6-7 55 6q6 2 9 12l-9 40-41 11-22-24z"/>
        <path d="M1818 181l20 10 10-9-23-8M1838 191l50 1M1847 182l36 0M1848 182l1 11-6 49M1838 191l-4 49M1834 240l9 2" fill="none"/>
      </g>
      <path d="M1858 186l-3 31" stroke="#a0a0f4" stroke-width="1.500"/><path d="M1825 220.500l29-3.500" stroke="#f4a0a0" stroke-width="1.500"/><path d="M1864 223l11 9" stroke="#a0f4a0" stroke-width="1.500"/>
      <text class="cube-text" transform="translate(1854 224) skewY(-7) skewX(-9) scale(.6 1)">REAR</text>
      <text class="cube-text" transform="translate(1818 206) skewY(42) scale(.38 .95)">RIGHT</text>
      <path d="M1846 177.500h3m2 0h2m2 .5h3m2 0h4" stroke="#111" stroke-width="1.500"/>
      <path d="M1873 249l10-3 10 3v13l-10 4-10-4z" fill="#77799c" stroke="#5b5c7e"/><path d="M1873 249l10 4 10-4-10-3z" fill="#9a9bba"/><path d="M1883 253v13" stroke="#5b5c7e"/><path d="M1897 253h13l-6.500 6z" fill="#3d3d54"/>
      <path d="M1879 926l2-17" stroke="#202088" stroke-width="1.600"/><path d="M1878.500 908l3-10 3 10z" fill="#202088"/>
      <path d="M1878 926.500l-18 1.500" stroke="#882020" stroke-width="1.600"/><path d="M1862 925l-12 3 12 3.500z" fill="#882020"/>
      <path d="M1879 926.500l13 9" stroke="#208820" stroke-width="1.600"/><path d="M1890 930.500l9 8-12-3z" fill="#208820"/>
      <text class="axis" x="1883" y="896.500">Z</text><text class="axis" x="1850" y="928">X</text><text class="axis" x="1898.500" y="938">Y</text>
    </svg>
    <div class="mdi-tabs">
      <div class="mtab"><svg class="ti"><use href="#logo"/></svg><span>Página inicial</span><svg class="tx gray"><use href="#x"/></svg></div>
      <div class="mtab on"><svg class="ti"><use href="#logo"/></svg><span>Unnamed : 1*</span><svg class="tx red"><use href="#x"/></svg></div>
    </div>
  </section>
</main>

<footer class="statusbar">
  <span class="status-msg">Não é permitido: Unnamed.Part.Body001.Pad001.Edge6</span>
  <div class="nav-style"><svg viewBox="0 0 13 18"><rect x="1.200" y="1.200" width="10.600" height="15.600" rx="4" fill="none" stroke="#333" stroke-width="1.800"/><path d="M6.500 4v4" stroke="#333" stroke-width="2"/></svg><span>Blender</span><i class="drop"></i></div>
  <span class="dims">126,34 mm x 67,03 mm</span>
</footer>

<div class="taskbar">
  <div class="apps">
    <div class="app"><svg viewBox="0 0 30 30"><path d="M5 7.500l8-1.200V14H5zM14.500 6L25 4.500V14H14.500zM5 15.500h8V23l-8-1.200zM14.500 15.500H25V25l-10.500-1.500z" fill="#fff"/></svg></div>
    <div class="app run"><svg viewBox="0 0 30 30"><path d="M1 3h11l2 3H1z" fill="#e0a008"/><path d="M1 6h28v20H1z" fill="#fbd063"/><path d="M6 26v-7q0-3 3-3h12q3 0 3 3v7h-5v-5h-8v5z" fill="#3c8fd8"/></svg></div>
    <div class="app"><svg viewBox="0 0 30 30"><path d="M8 6V2.500Q8 1 9.500 1h11Q22 1 22 2.500V6" fill="none" stroke="#2aa6e0" stroke-width="2"/><path d="M1 6h28v20q0 3-3 3H4q-3 0-3-3z" fill="#f2f2f2"/><path d="M9 11h6v5.500H9z" fill="#f25022"/><path d="M16 11h5.500v5.500H16z" fill="#7fba00"/><path d="M9 17.500h6V23H9z" fill="#00a4ef"/><path d="M16 17.500h5.500V23H16z" fill="#ffb900"/></svg></div>
    <div class="app run"><svg viewBox="0 0 30 30"><circle cx="15" cy="15" r="14" fill="#fc3"/><path d="M15 15L2.900 8A14 14 0 0 1 27.100 8z" fill="#e24539"/><path d="M2.900 8A14 14 0 0 0 15 29l6-10.500-6-3.500z" fill="#2da04f"/><path d="M2.900 8L9 18.500 13 9z" fill="#2da04f"/><path d="M2.900 8A14 14 0 0 1 27.100 8H15L9 12z" fill="#e24539"/><circle cx="15" cy="15" r="6.500" fill="#fff"/><circle cx="15" cy="15" r="5.200" fill="#4285f4"/></svg></div>
    <div class="app"><svg viewBox="0 0 30 30"><rect x="3" y="0" width="24" height="30" rx="2" fill="#7d8791"/><path d="M6 3h18v5H6z" fill="#40d0f5"/><path d="M6 10.500h5v5H6zM12.500 10.500h5v5h-5zM19 10.500h5v5h-5zM6 16.500h5v5H6zM12.500 16.500h5v5h-5zM6 22.500h5v5H6zM12.500 22.500h5v5h-5z" fill="#e4e7ea"/><path d="M19 16.500h5v11h-5z" fill="#1a4d80"/></svg></div>
    <div class="app run"><svg viewBox="0 0 30 30"><path d="M25 4l3 0-1 23h-4z" fill="#c99a3e"/><path d="M9 2l17 2-2 23-21-4z" fill="#6fb4c2"/><path d="M10 2l16 2-1 6-18-3z" fill="#c5d5d8"/><path d="M4 21l19 3 2-8v11l-2 1-21-5z" fill="#eee"/></svg></div>
    <div class="app"><svg viewBox="0 0 30 30"><circle cx="15" cy="15" r="14" fill="url(#steam)"/><path d="M1 16l9 4 9-8" fill="none" stroke="#fff" stroke-width="4.500"/><circle cx="19" cy="11.500" r="5.500" fill="#fff"/><circle cx="19" cy="11.500" r="3" fill="#17345f"/><circle cx="11" cy="20" r="4.500" fill="#fff"/><circle cx="11" cy="20" r="2.400" fill="#17507f"/></svg></div>
    <div class="app"><svg viewBox="0 0 30 30"><path d="M0 0h30v30H0z" fill="#484848"/><path d="M5 5h20v20H5z" fill="#000"/><path d="M8 9c3-4 11-4 14 0l-1 8-3 2-1 4-2-2-2 2-2-3-2 3-1-7 1-2z" fill="#ddd"/><path d="M10 12h4v3h-4zM16 11h4l-1 4zM14 17l1-3 1 3zM9 10l3-2 1 2z" fill="#000"/></svg></div>
    <div class="app"><svg viewBox="0 0 28 28"><path d="M1 1h16v6H8v4h6v5H8v11H1z" fill="#ff4a10" stroke="#300"/><g fill="none"><circle cx="19" cy="18" r="7.600" stroke="#06173f" stroke-width="3.800" stroke-dasharray="3.600 2.370"/><circle cx="19" cy="18" r="5" stroke="#06173f" stroke-width="5"/><circle cx="19" cy="18" r="7.200" stroke="#1853c0" stroke-width="2.400" stroke-dasharray="2.200 3.455" stroke-dashoffset="-.6"/><circle cx="19" cy="18" r="5" stroke="#1550bb" stroke-width="3.600"/></g></svg></div>
    <div class="app run on"><svg><use href="#logo"/></svg></div>
  </div>
  <div class="tray">
    <svg class="tray-up" viewBox="0 0 16 10"><path d="M.5 9L8 1.500 15.500 9"/></svg>
    <svg class="tray-i" viewBox="0 0 20 20"><path d="M4 6h15v9H4z" fill="none"/><path d="M6 8h11v5H6z" fill="#fff" stroke="none"/><path d="M0 5h5M1 3v3h3V3M2.500 6v8h2M19.500 9v3"/></svg>
    <svg class="tray-i" viewBox="0 0 20 20"><path d="M4 9c1-7 11-6 12-1 5 0 5 7 1 7H3c-4 0-4-6 1-6z" fill="#9aa3b0" stroke="none"/><path d="M3 9c3-2 5 0 8 2 2-3 9-1 8 2 0 2-2 3-4 3H3c-4 0-4-6 0-7z" fill="#fff" stroke="none"/></svg>
    <svg class="tray-i" viewBox="0 0 20 20"><path d="M4.500 2.500h15v12H2.500V7M11 14.500v3M7 17.500h9M.5 2.500h4v4h-4z" fill="none"/></svg>
    <svg class="tray-i" viewBox="0 0 20 20"><path d="M.5 7.500h3l4-4v13l-4-4h-3z" fill="none"/><path d="M10 7.500q2 2.500 0 5M13 5.500q4 4.500 0 9" fill="none"/><path d="M16 3q6 7 0 14" fill="none" stroke="#7b8596"/></svg>
    <div class="clock"><span>17:31</span><span>04/03/2022</span></div>
    <div class="notify"><svg viewBox="0 0 20 20"><path d="M0 1h20v15H8l-3 3v-3H0z" fill="#fff"/><path d="M4 5h12M4 8.500h12M4 12h8" stroke="#1b2840" stroke-width="1.300"/></svg><b>1</b></div>
    <i class="peek"></i>
  </div>
</div>

<div class="dialog">
  <div class="dlg-title"><svg class="dlg-icon"><use href="#logo"/></svg><span>Select Color</span><svg class="dlg-close" viewBox="0 0 12 12"><path d="M.3.3l11.400 11.400M11.700.3L.3 11.700"/></svg></div>
  <div class="dlg-body">
    <div class="col-left">
      <label class="lb-basic">Basic colors</label>
      <div class="swatches" id="basic"></div>
      <button class="wide pick">Pick Screen Color</button>
      <label class="lb-custom">Custom colors</label>
      <div class="swatches" id="custom"></div>
      <button class="wide">Add to Custom Colors</button>
    </div>
    <div class="col-right">
      <div class="pickers">
        <div class="spectrum"><i class="cross"></i></div>
        <div class="value-bar"></div><i class="value-arrow"></i>
      </div>
      <div class="values">
        <div class="preview"></div>
        <div class="fields">
          <label>Hue:</label><div class="spin">66<i></i></div><label>Red:</label><div class="spin">247<i></i></div>
          <label>Sat:</label><div class="spin">83<i></i></div><label>Green:</label><div class="spin">255<i></i></div>
          <label>Val:</label><div class="spin">255<i></i></div><label>Blue:</label><div class="spin">172<i></i></div>
          <label class="alpha">Alpha channel:</label><div class="spin">0<i></i></div>
          <label class="html-l">HTML:</label><div class="html-f">#f7ffac</div>
        </div>
      </div>
      <div class="dlg-buttons"><button class="default">OK</button><button>Cancel</button></div>
    </div>
  </div>
</div>
<script src="app.js"></script>
</body>
</html>
```
FILE: app.js
```
// Basic palette in display order, eight swatches to a row.
const basic = [
  '#000000','#aa0000','#005500','#aa5500','#00aa00','#aaaa00','#00ff00','#aaff00',
  '#00007f','#aa007f','#00557f','#aa557f','#00aa7f','#aaaa7f','#00ff7f','#aaff7f',
  '#0000ff','#aa00ff','#0055ff','#aa55ff','#00aaff','#aaaaff','#00ffff','#aaffff',
  '#550000','#ff0000','#555500','#ff5500','#55aa00','#ffaa00','#55ff00','#ffff00',
  '#55007f','#ff007f','#55557f','#ff557f','#55aa7f','#ffaa7f','#55ff7f','#ffff7f',
  '#5500ff','#ff00ff','#5555ff','#ff55ff','#55aaff','#ffaaff','#55ffff','#ffffff'
];
const fill = (id, colors, selected) => {
  const box = document.getElementById(id);
  colors.forEach((color, i) => {
    const s = document.createElement('i');
    s.style.backgroundColor = color;
    if (i === selected) s.className = 'sel';
    box.append(s);
  });
};
fill('basic', basic, 39);
fill('custom', Array(16).fill('#ffffff'), -1);
```
FILE: styles.css
```
* { box-sizing: border-box; }
body { margin: 0; width: 1920px; height: 1080px; overflow: hidden; display: flex; flex-direction: column; background: #f0f0f0; color: #000; font: 13px/16px "DejaVu Sans Condensed", "DejaVu Sans", sans-serif; letter-spacing: -0.21px; position: relative; }
.defs { position: absolute; }
svg { display: block; flex: none; }
i { display: block; flex: none; }
button { font: inherit; letter-spacing: inherit; color: #000; background: #e1e1e1; border: 1px solid #adadad; padding: 0; white-space: nowrap; }

.c { fill: #2bdada; stroke: #0b3a3d; stroke-width: 1.2; }
.cw { fill: none; stroke: #0b3a3d; stroke-width: 3.2; }
.cl { fill: none; stroke: #2bd0d0; stroke-width: 1.5; }
.cs { fill: none; stroke: #0b5a5d; stroke-width: 2; }
.g { fill: #a6a6a6; stroke: #757575; stroke-width: 1.3; }
.w { fill: #dadada; stroke: #757575; stroke-width: 1.3; }
.s { stroke: #757575; stroke-width: 1.3; }
.n { fill: none; stroke: #757575; stroke-width: 1.3; }
.k { fill: none; stroke: #747474; stroke-width: 3.2; }
.kl { fill: none; stroke: #a6a6a6; stroke-width: 1.2; }

.titlebar { height: 28px; background: #fff; display: flex; align-items: center; padding-left: 2px; color: #999; font: 14px/20px "Open Sans", sans-serif; letter-spacing: 0; }
.app-icon { width: 20px; height: 20px; margin-right: 5px; }
.app-name { padding-top: 1px; }
.window-buttons { margin-left: auto; display: flex; gap: 46px; padding-right: 26px; }
.window-buttons svg { width: 12px; height: 12px; fill: none; stroke: #999; }
.menubar { height: 26px; background: #fff; border-bottom: 1px solid #e8e8e8; display: flex; gap: 17px; padding: 5px 8px 0; color: #999; font: 14px/20px "Open Sans", sans-serif; letter-spacing: -0.1px; }

.toolrow { display: flex; height: 41px; border-top: 1px solid #fff; border-bottom: 1px solid #b4b4b4; }
.toolrow.second { height: 40px; }
.toolbar { display: flex; align-items: center; padding-left: 3px; border-right: 1px solid #b4b4b4; box-shadow: inset 1px 0 #fff; }
.tb-file { width: 538px; } .tb-wb { width: 181px; } .tb-macro { width: 162px; } .tb-view { flex: 1; border-right: 0; }
.tb-struct { width: 177px; } .tb-help { width: 428px; } .tb-model { width: 886px; } .tb-measure { flex: 1; }
.grip { width: 3px; height: 29px; margin-right: 5px; background: repeating-linear-gradient(#bbb 0 2px, transparent 2px 4.500px); }
.ic { width: 28px; height: 28px; margin: 0 4.5px; }
.sep { width: 6.5px; height: 30px; background: linear-gradient(#cfcfcf, #cfcfcf) center / 1px 100% no-repeat; }
.drop { width: 15.5px; height: 5px; background: #000; clip-path: polygon(4px 0, 14px 0, 9px 5px); }
.drop.off { background: #777; }
.combo { width: 167px; height: 23px; margin-left: 1.5px; display: flex; align-items: center; background: #e1e1e1; border: 1px solid #adadad; padding: 0 6px 0 4px; }
.combo-icon { width: 17px; height: 17px; margin-right: 3px; }
.combo span { padding-top: 2px; letter-spacing: -0.3px; }
.chev { width: 10px; height: 6px; margin-left: auto; fill: none; stroke: #444; }

.work { height: 861px; display: flex; }
.dock { width: 350px; padding-top: 1px; display: flex; flex-direction: column; }
.dock-title { width: 345px; height: 23px; display: flex; align-items: center; justify-content: space-between; background: #dadada; border: 1px solid #bbb; padding: 1px 7px 0 4px; font-size: 14.500px; letter-spacing: -0.12px; }
.dock-title svg { width: 11px; height: 12px; fill: none; stroke: #222; stroke-width: 1.200; }
.dock-tabs { display: flex; align-items: flex-end; height: 29px; padding-left: 2px; }
.dtab { width: 68px; height: 26px; border: 1px solid #d9d9d9; border-bottom: 0; display: flex; align-items: center; justify-content: center; }
.dtab.on { width: 99px; height: 28px; background: #fff; border-left: 0; gap: 4px; padding-left: 2px; }
.dtab svg { width: 20px; height: 20px; margin-top: -2px; }
.task-frame { width: 343px; height: 807px; border: 1px solid #d9d9d9; background: #fff; padding: 1px; }
.task-area { height: 100%; border: 1px solid #828790; background: linear-gradient(#aaaabf 0, #8b89a9 62px, #333366 235px); padding: 20px 8px 0; }
.task-buttons { display: flex; justify-content: center; gap: 9px; margin-bottom: 20px; }
.task-buttons button { width: 91px; height: 26px; }
.task-box { width: 321px; height: 206px; border: 1px solid #fff; border-radius: 3px 3px 0 0; background: #d6dff7; }
.task-box h2 { margin: 0; height: 24px; border-bottom: 1px solid #fff; background: linear-gradient(90deg, #fff, #c6d3f7); display: flex; align-items: center; padding: 0 2px 0 8px; font: bold 13px/16px "DejaVu Sans Condensed", sans-serif; letter-spacing: -0.05px; color: #215dc6; }
.task-box h2 span { flex: 1; text-align: center; padding-right: 13px; }
.task-box h2 svg { width: 16px; height: 16px; }
.task-body { padding: 16px 15px 0; }
.task-body p { margin: 0 0 7px; white-space: nowrap; }
fieldset { margin: 0; padding: 12px 11px 0; width: 289px; height: 91px; border: 1px solid #dcdcdc; }
legend { padding: 0 2px; margin-left: -4px; }
.color-button { width: 144px; height: 27px; margin: 7px 0 0 1px; background: #dfe1e1; display: flex; align-items: center; justify-content: center; }
.color-button i { width: 36px; height: 16px; border: 1px solid #999; background: #f0f0f0; box-shadow: 0 0 0 2px #f0f0f0; }
.faces { height: 16px; }
.task-actions { display: flex; gap: 9px; margin-top: 9px; padding-left: 1px; }
.task-actions button { width: 142px; height: 26px; }
.task-actions button + button { width: 103px; }

.center { flex: 1; }
.view3d { width: 1570px; height: 833px; background: linear-gradient(#333366, #aaaac0); }
.cube-text { font: bold 15px "Liberation Sans", sans-serif; letter-spacing: 0; }
.axis { font: 10px "DejaVu Sans", sans-serif; stroke: #000; stroke-width: .3; }
.mdi-tabs { display: flex; padding-left: 2px; align-items: flex-start; border-top: 1px solid #a0a0a0; }
.mtab { width: 148px; height: 26px; display: flex; align-items: center; padding: 0 0 1px 12px; border: 1px solid #d9d9d9; border-top: 0; border-right: 0; letter-spacing: -0.12px; }
.mtab.on { width: 162px; height: 28px; margin-top: -1px; background: #fff; padding-left: 16px; border-right: 1px solid #d9d9d9; letter-spacing: 0; }
.mtab span { padding-top: 1px; }
.ti { width: 20px; height: 20px; margin-right: 4px; }
.tx { width: 14px; height: 14px; margin-left: 6px; }
.on .tx { margin-left: 8px; }
.gray { color: #bdbdbd; } .red { color: #e0603f; }

.statusbar { height: 34px; display: flex; align-items: stretch; line-height: 36px; }
.status-msg { padding-left: 2px; flex: 1; white-space: nowrap; letter-spacing: -0.18px; }
.nav-style { width: 106px; margin: 2px 0; display: flex; align-items: center; line-height: 32px; padding-left: 19px; border-left: 1px solid #d0d0d0; border-right: 1px solid #d0d0d0; }
.nav-style svg { width: 13px; height: 18px; margin-right: 8px; }
.nav-style span { padding-top: 1px; }
.nav-style .drop { clip-path: polygon(4px 0, 12px 0, 8px 4px); }
.dims { width: 142px; padding-left: 4px; white-space: nowrap; overflow: hidden; }

.taskbar { height: 50px; display: flex; background: linear-gradient(90deg, #233b44, #21363f 45%, #1b2c3f 80%, #1b2840); color: #fff; }
.apps { display: flex; }
.app { width: 62px; height: 50px; display: flex; align-items: center; justify-content: center; }
.app:first-child { width: 63px; padding-right: 3px; }
.app svg { width: 30px; height: 30px; }
.app.run { background: linear-gradient(#76b9ed, #76b9ed) center bottom / 51px 3px no-repeat; }
.app.on { width: 61px; background: linear-gradient(#76b9ed, #76b9ed) bottom / 100% 3px no-repeat #4f6269; }
.tray { margin-left: auto; display: flex; align-items: center; font: 14.500px/22px "Open Sans", sans-serif; letter-spacing: -0.2px; }
.tray-up { width: 16px; height: 10px; margin-right: 12px; fill: none; stroke: #fff; stroke-width: 1.300; }
.tray-i { width: 20px; height: 20px; margin-right: 10px; stroke: #fff; stroke-width: 1.100; }
.clock { width: 82px; display: flex; flex-direction: column; text-align: center; }
.notify { position: relative; width: 33px; height: 50px; margin-left: 20px; }
.notify svg { width: 20px; height: 20px; margin: 14px 0 0; }
.notify b { position: absolute; left: 9px; top: 24px; width: 21px; height: 21px; border: 1px solid #888; border-radius: 50%; background: #333840; font: 600 13px/19px "Open Sans", sans-serif; text-align: center; }
.peek { width: 1px; height: 50px; background: #66707f; margin: 0 5px 0 12px; }

.dialog { position: absolute; left: 442px; top: 375px; width: 532px; height: 490px; border: 1px solid #4a4a52; background: #f0f0f0; box-shadow: 0 4px 14px rgba(0,0,0,.4); }
.dlg-title { height: 38px; background: #fff; display: flex; align-items: center; padding: 0 14px 1px 9px; font: 14.500px/20px "Open Sans", sans-serif; letter-spacing: 0.1px; }
.dlg-icon { width: 20px; height: 20px; margin-right: 5px; }
.dlg-close { width: 13px; height: 13px; margin-left: auto; fill: none; stroke: #000; }
.dlg-body { display: flex; height: 450px; }
.col-left { width: 251px; padding: 13px 0 0 14px; display: flex; flex-direction: column; }
.col-left label { height: 16px; margin-left: -1px; }
.lb-custom { margin-top: 76px; }
.swatches { display: grid; grid-template-columns: repeat(8, 22px); gap: 6px; padding: 9px 0 11px 2px; }
.swatches i { height: 18px; border: 1px solid #828790; }
.swatches .sel { outline: 1px dotted #000; outline-offset: 2px; }
.wide { width: 222px; height: 26px; }
.col-right { padding-top: 22px; }
.pickers { display: flex; height: 202px; }
.spectrum { position: relative; width: 222px; height: 202px; border: 1px solid; border-color: #a0a0a0 #fff #fff #a0a0a0; background: linear-gradient(rgba(200,200,200,0), #c8c8c8), linear-gradient(90deg, #c80000, #c800c8 16.700%, #0000c8 33.300%, #00c8c8 50%, #00c800 66.700%, #c8c800 83.300%, #c80000); }
.cross { position: absolute; left: 169px; top: 125px; width: 20px; height: 20px; background: linear-gradient(#000, #000) center / 2px 100% no-repeat, linear-gradient(#000, #000) center / 100% 2px no-repeat; }
.value-bar { width: 15px; margin-left: 17px; border: 1px solid; border-color: #a0a0a0 #fff #fff #a0a0a0; background: linear-gradient(#f7ffac, #000); }
.value-arrow { width: 5px; height: 9px; margin-top: -3px; background: #000; clip-path: polygon(100% 0, 100% 100%, 0 50%); }
.values { display: flex; margin-top: 24px; }
.preview { width: 60px; height: 147px; border: 1px solid; border-color: #a0a0a0 #fff #fff #a0a0a0; background: #f7ffac; }
.fields { display: grid; grid-template-columns: 39px 53px 46px 53px; grid-template-rows: 22px 22px 22px 22px 24px; row-gap: 7px; margin-left: 8px; align-items: center; line-height: 23px; }
.fields label { text-align: right; white-space: nowrap; justify-self: end; }
.spin { position: relative; margin-left: 8px; height: 22px; border: 1px solid #7a7a7a; background: #fff; padding-left: 2px; line-height: 22px; }
.spin i { position: absolute; right: 1px; top: 1px; width: 14px; height: 18px; border: 1px solid #bbb; background: linear-gradient(#bbb, #bbb) center / 100% 1px no-repeat #eee; }
.spin i::before, .spin i::after { content: ""; position: absolute; left: 2px; width: 8px; height: 4px; background: #000; }
.spin i::before { top: 3px; clip-path: polygon(50% 0, 100% 100%, 0 100%); }
.spin i::after { bottom: 2px; clip-path: polygon(0 0, 100% 0, 50% 100%); }
.alpha { grid-column: 1 / 4; }
.html-l, .html-f { margin-top: 14px; }
.html-l { grid-column: 1; }
.html-f { grid-column: 2 / 5; width: 137px; height: 24px; margin-left: 8px; border: 1px solid #7a7a7a; background: #fff; padding-left: 3px; line-height: 23px; }
.dlg-buttons { display: flex; gap: 9px; margin: 15px 0 0 74px; }
.dlg-buttons button { width: 91px; height: 26px; }
.dlg-buttons .default { background: #e5f1fb; border-color: #0078d7; }
```
